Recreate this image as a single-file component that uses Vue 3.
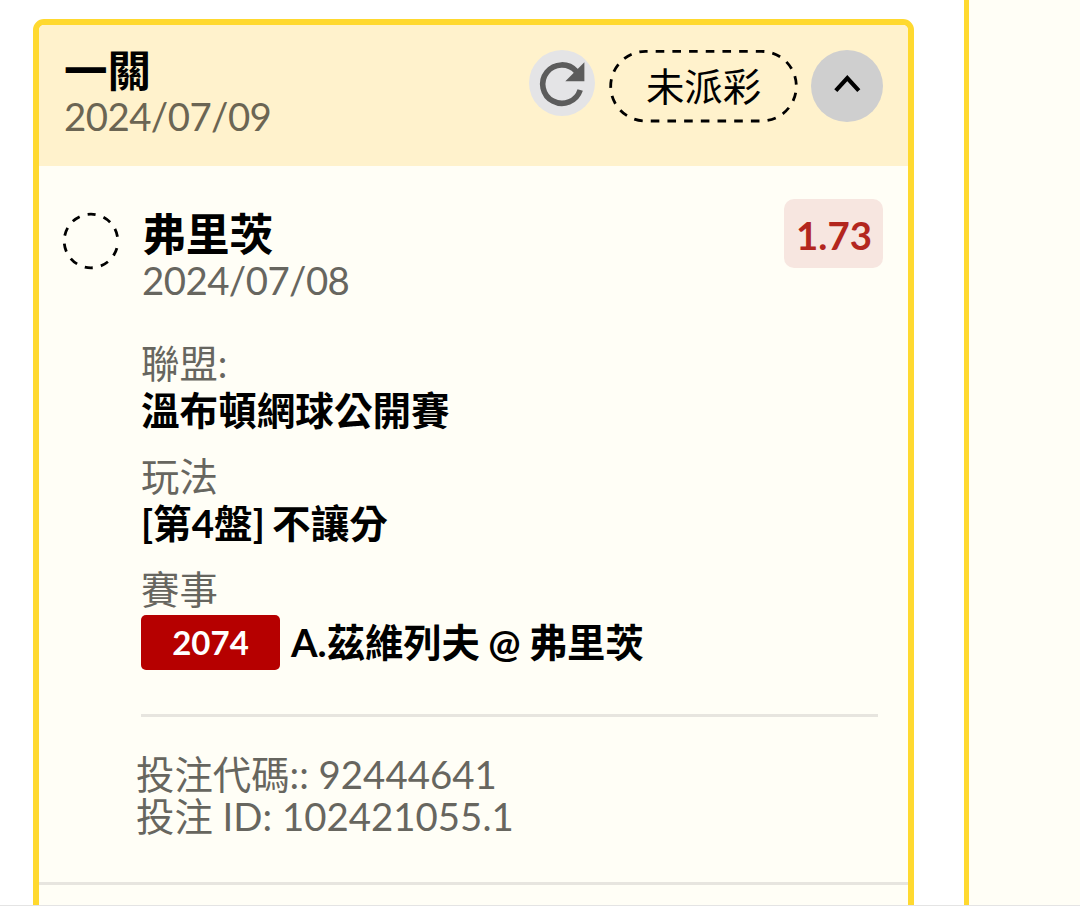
<template>
  <div class="page">
    <section class="ticket">
      <header class="ticket-head">
        <div>
          <div class="title">{{ ticket.name }}</div>
          <div class="date">{{ ticket.date }}</div>
        </div>
        <div class="actions">
          <button class="refresh" aria-label="refresh">
            <svg width="66" height="66" viewBox="0 0 66 66">
              <path d="M51.2 40A19.2 19.2 0 1 1 47.3 21.4" fill="none" stroke="#5c5c5c" stroke-width="5.6" />
              <path d="M55.4 12.2V31.2H36.3Z" fill="#5c5c5c" />
            </svg>
          </button>
          <div class="status">
            <svg class="outline" width="189" height="73" viewBox="0 0 189 73">
              <rect x="1.7" y="1.4" width="185.6" height="69.6" rx="34.8" fill="none" stroke="#000" stroke-width="2.8" stroke-dasharray="8.6 8.09" stroke-dashoffset="6.5" />
            </svg>
            <span>{{ ticket.status }}</span>
          </div>
          <button class="toggle" aria-label="toggle" @click="open = !open">
            <svg width="72" height="72" viewBox="0 0 72 72" :class="{ closed: !open }">
              <path d="M24.8 40.6L36.3 28L47.8 40.6" fill="none" stroke="#000" stroke-width="4.2" />
            </svg>
          </button>
        </div>
      </header>

      <div v-if="open" class="bet">
        <svg class="mark" width="58" height="58" viewBox="0 0 58 58">
          <circle cx="29" cy="29" r="26.8" fill="none" stroke="#000" stroke-width="2.8" stroke-dasharray="8.2 8.2" stroke-dashoffset="-7.2" />
        </svg>
        <div class="bet-main">
          <div class="bet-top">
            <div>
              <div class="title">{{ bet.pick }}</div>
              <div class="date">{{ bet.date }}</div>
            </div>
            <div class="odds">{{ bet.odds }}</div>
          </div>
          <dl class="info">
            <template v-for="row in bet.rows" :key="row.label">
              <dt>{{ row.label }}</dt>
              <dd>{{ row.value }}</dd>
            </template>
            <dt>賽事</dt>
            <dd class="match">
              <span class="code">{{ bet.code }}</span>
              <span>{{ bet.match }}</span>
            </dd>
          </dl>
          <div class="ids">
            <div>投注代碼:: {{ bet.betCode }}</div>
            <div>投注 ID: {{ bet.betId }}</div>
          </div>
        </div>
      </div>
      <div class="ticket-foot"></div>
    </section>
    <aside class="next-ticket"></aside>
  </div>
</template>

<script setup>
import { ref } from 'vue';

const open = ref(true);

const ticket = {
  name: '一關',
  date: '2024/07/09',
  status: '未派彩',
};

const bet = {
  pick: '弗里茨',
  date: '2024/07/08',
  odds: '1.73',
  rows: [
    { label: '聯盟:', value: '溫布頓網球公開賽' },
    { label: '玩法', value: '[第4盤] 不讓分' },
  ],
  code: '2074',
  match: 'A.茲維列夫 @ 弗里茨',
  betCode: '92444641',
  betId: '102421055.1',
};
</script>

<style>
body {
  background: #fff;
  overflow: hidden;
}
</style>

<style scoped>
.page {
  display: flex;
  height: 906px;
  box-sizing: border-box;
  overflow: hidden;
  padding-left: 33px;
  border-bottom: 1px solid #e4e4e4;
  font-family: Lato, "Noto Sans CJK TC", sans-serif;
  font-size: 38.4px;
  color: #000;
}

.ticket {
  width: 881px;
  height: 920px;
  flex: none;
  box-sizing: border-box;
  margin-top: 19px;
  border: 6px solid #ffd92f;
  border-radius: 11px;
  background: #fffef6;
  overflow: hidden;
}

.ticket-head {
  display: flex;
  justify-content: space-between;
  height: 141px;
  box-sizing: border-box;
  padding: 22px 25px 0 25px;
  background: #fff2cc;
}

.title {
  font-size: 43.5px;
  font-weight: 700;
  line-height: 46px;
}

.date {
  line-height: 46px;
  letter-spacing: -0.55px;
  color: #67665f;
}

.ticket-head .date {
  color: #6b6553;
}

.actions {
  display: flex;
  align-items: flex-start;
  padding-top: 3px;
}

button {
  display: block;
  padding: 0;
  border: 0;
  border-radius: 50%;
}

button svg {
  display: block;
}

.refresh {
  background: #e4e4e6;
}

.status {
  position: relative;
  display: flex;
  justify-content: center;
  width: 189px;
  height: 73px;
  line-height: 73px;
  margin: 0 13px 0 14px;
}

.outline {
  position: absolute;
  inset: 0;
}

.toggle {
  background: #cfcfcf;
}

.closed {
  transform: rotate(180deg);
}

.bet {
  display: flex;
  padding: 33px 25px 0 23px;
}

.mark {
  flex: none;
  margin-top: 13px;
}

.bet-main {
  flex: 1;
  margin-left: 22px;
}

.bet-top {
  display: flex;
  justify-content: space-between;
  align-items: flex-start;
}

.bet-top > div:first-child {
  padding-top: 12px;
}

.bet-top .title {
  font-size: 43.8px;
}

.odds {
  width: 99px;
  height: 69px;
  line-height: 72px;
  border-radius: 10px;
  background: #f7e6e0;
  color: #b3261e;
  font-weight: 700;
  text-align: center;
  text-indent: 1px;
}

.info {
  margin: 37px 5px 0 -1px;
  padding-bottom: 44px;
  border-bottom: 3px solid #e7e5df;
}

dt {
  line-height: 47px;
  color: #67665f;
}

dd {
  margin: 0 0 19px;
  line-height: 47px;
  font-size: 38.6px;
  font-weight: 700;
  word-spacing: -2px;
}

.match {
  display: flex;
  align-items: center;
  gap: 11px;
  margin: 2px 0 0;
  line-height: 49px;
  font-size: 38.3px;
  word-spacing: -1px;
}

.code {
  width: 139px;
  height: 55px;
  line-height: 55px;
  border-radius: 5px;
  background: #b60000;
  color: #fff;
  font-size: 33px;
  text-align: center;
}

.ids {
  margin: 36px 0 0 -6px;
  line-height: 42px;
  color: #67665f;
}

.ticket-foot {
  margin-top: 45px;
  border-top: 3px solid #e7e5df;
}

.next-ticket {
  flex: 1;
  margin-left: 50px;
  border-left: 5px solid #ffd92f;
  background: #fffef6;
}
</style>
